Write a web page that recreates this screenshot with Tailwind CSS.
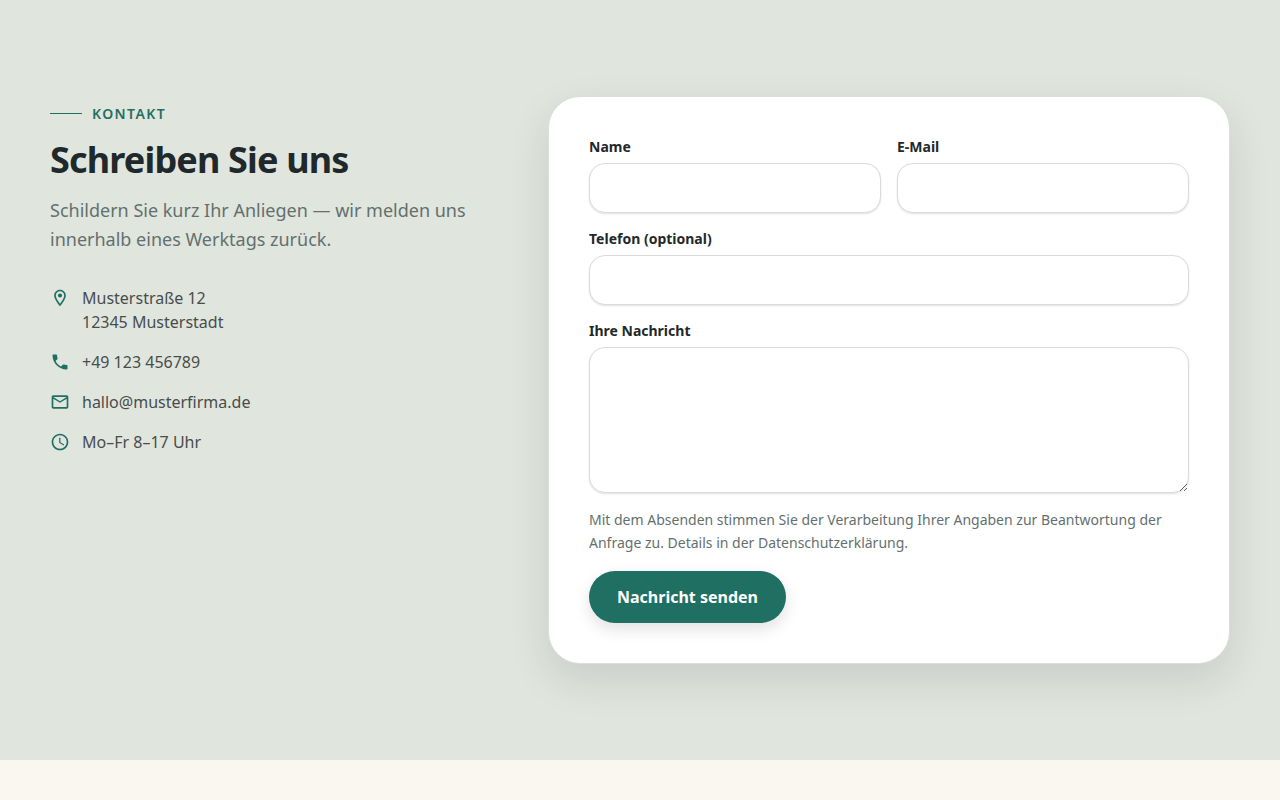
<!DOCTYPE html>
<html lang="de">
<head>
  <meta charset="UTF-8" />
  <meta name="viewport" content="width=device-width, initial-scale=1.0"/>
  <title>Kontakt</title>
  <script src="https://cdn.jsdelivr.net/npm/@tailwindcss/browser@4"></script>
</head>
<body class="bg-[#faf7f0] min-h-screen overflow-hidden font-['Noto_Sans',sans-serif] text-[#1f292b]">

  <section class="bg-[#e0e5de] h-[760px] py-24">
    <div class="w-[1180px] mx-auto flex items-start justify-between">

      <!-- Contact details -->
      <div class="w-[434px] pt-2">
        <p class="flex items-center gap-2.5 h-5 text-sm font-semibold tracking-[1.4px] text-[#1f6f63]">
          <span class="w-8 h-px -mt-px bg-[#1f6f63]"></span>
          KONTAKT
        </p>
        <h1 class="mt-3 text-4xl leading-[48px] font-bold tracking-[-0.84px]">Schreiben Sie uns</h1>
        <p class="mt-3 text-lg leading-[29px] text-[#64706e]">Schildern Sie kurz Ihr Anliegen — wir melden uns innerhalb eines Werktags zurück.</p>

        <ul class="mt-8 flex flex-col gap-4 text-base leading-6 text-[#484d4c]">
          <li class="flex gap-3">
            <svg class="size-5 mt-0.5 shrink-0 fill-[#1f6f63]" viewBox="0 0 24 24"><path d="M12 2C8.13 2 5 5.13 5 9c0 5.25 7 13 7 13s7-7.75 7-13c0-3.87-3.13-7-7-7zM7 9c0-2.76 2.24-5 5-5s5 2.24 5 5c0 2.88-2.88 7.19-5 9.88C9.92 16.21 7 11.85 7 9z"/><circle cx="12" cy="9" r="2.5"/></svg>
            <span>Musterstraße 12<br>12345 Musterstadt</span>
          </li>
          <li class="flex gap-3">
            <svg class="size-5 mt-0.5 shrink-0 fill-[#1f6f63]" viewBox="0 0 24 24"><path d="M6.62 10.79c1.44 2.83 3.76 5.14 6.59 6.59l2.2-2.2c.27-.27.67-.36 1.02-.24 1.12.37 2.33.57 3.57.57.55 0 1 .45 1 1V20c0 .55-.45 1-1 1-9.39 0-17-7.61-17-17 0-.55.45-1 1-1h3.5c.55 0 1 .45 1 1 0 1.25.2 2.45.57 3.57.11.35.03.74-.25 1.02l-2.2 2.2z"/></svg>
            <span>+49 123 456789</span>
          </li>
          <li class="flex gap-3">
            <svg class="size-5 mt-0.5 shrink-0 fill-[#1f6f63]" viewBox="0 0 24 24"><path d="M22 6c0-1.1-.9-2-2-2H4c-1.1 0-2 .9-2 2v12c0 1.1.9 2 2 2h16c1.1 0 2-.9 2-2V6zm-2 0-8 5-8-5h16zm0 12H4V8l8 5 8-5v10z"/></svg>
            <span>hallo@musterfirma.de</span>
          </li>
          <li class="flex gap-3">
            <svg class="size-5 mt-0.5 shrink-0 fill-[#1f6f63]" viewBox="0 0 24 24"><path d="M11.99 2C6.47 2 2 6.48 2 12s4.47 10 9.99 10C17.52 22 22 17.52 22 12S17.52 2 11.99 2zM12 20c-4.42 0-8-3.58-8-8s3.58-8 8-8 8 3.58 8 8-3.58 8-8 8zm.5-13H11v6l5.25 3.15.75-1.23-4.5-2.67z"/></svg>
            <span>Mo–Fr 8–17 Uhr</span>
          </li>
        </ul>
      </div>

      <!-- Form -->
      <form class="w-[682px] p-10 flex flex-col gap-4 bg-white border border-[#dbdfdb] rounded-[32px] shadow-[0_16px_40px_rgba(31,41,43,0.12)]">
        <div class="grid grid-cols-2 gap-4">
          <div>
            <label for="name" class="block mb-1.5 text-sm font-bold">Name</label>
            <input id="name" type="text" class="block w-full h-[50px] px-4 bg-white border border-[#dadbdb] rounded-2xl shadow-[0_1px_2px_rgba(0,0,0,0.12)]" />
          </div>
          <div>
            <label for="email" class="block mb-1.5 text-sm font-bold">E-Mail</label>
            <input id="email" type="email" class="block w-full h-[50px] px-4 bg-white border border-[#dadbdb] rounded-2xl shadow-[0_1px_2px_rgba(0,0,0,0.12)]" />
          </div>
        </div>
        <div>
          <label for="phone" class="block mb-1.5 text-sm font-bold">Telefon (optional)</label>
          <input id="phone" type="tel" class="block w-full h-[50px] px-4 bg-white border border-[#dadbdb] rounded-2xl shadow-[0_1px_2px_rgba(0,0,0,0.12)]" />
        </div>
        <div>
          <label for="message" class="block mb-1.5 text-sm font-bold">Ihre Nachricht</label>
          <textarea id="message" class="block w-full h-[146px] px-4 py-3 bg-white border border-[#dadbdb] rounded-2xl shadow-[0_1px_2px_rgba(0,0,0,0.12)] resize-y"></textarea>
        </div>
        <p class="-mt-px mb-px text-sm leading-[23px] text-[#64706e]">Mit dem Absenden stimmen Sie der Verarbeitung Ihrer Angaben zur Beantwortung der Anfrage zu. Details in der Datenschutzerklärung.</p>
        <button type="button" class="self-start h-[52px] px-7 rounded-full bg-[#1f6f63] text-white text-base font-bold shadow-[0_6px_16px_rgba(0,0,0,0.12)]">Nachricht senden</button>
      </form>

    </div>
  </section>

</body>
</html>
